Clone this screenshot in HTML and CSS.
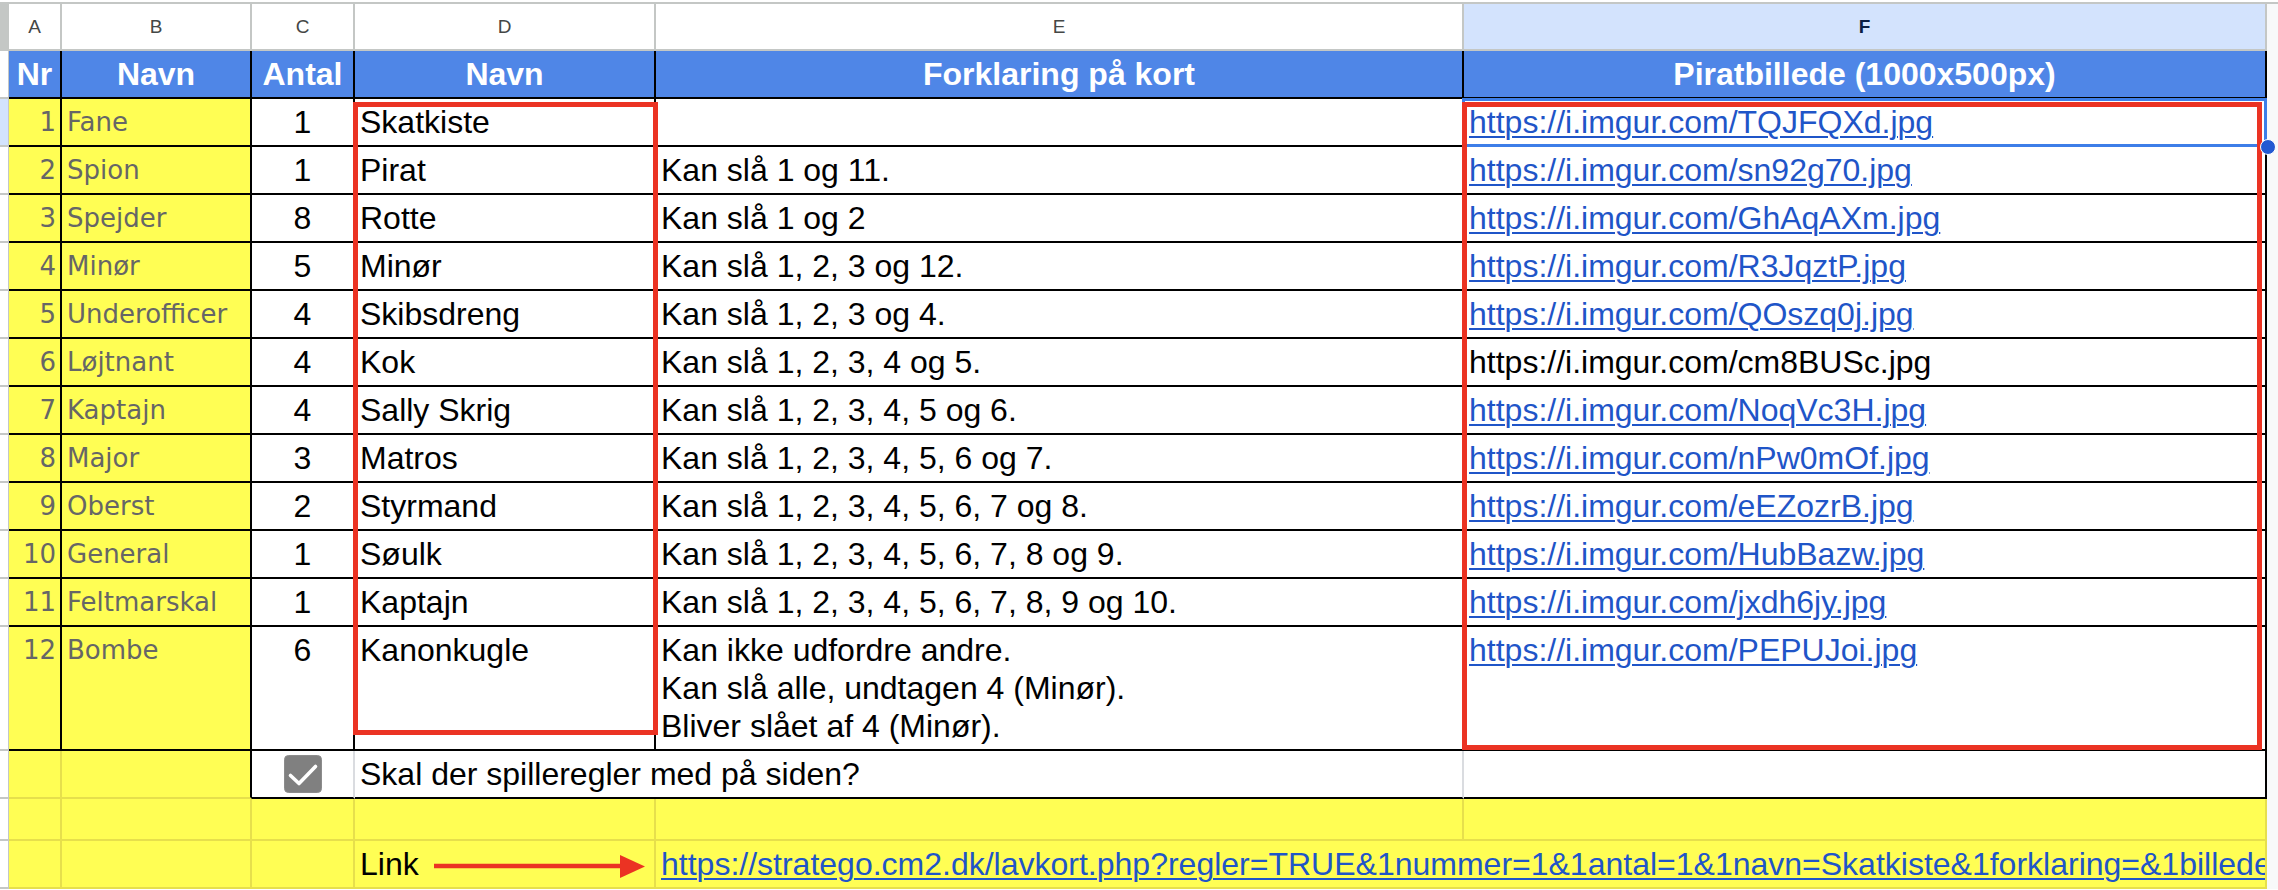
FILE: index.html
```html
<!DOCTYPE html>
<html lang="da">
<head>
<meta charset="utf-8">
<title>Stratego kort</title>
<link rel="stylesheet" href="styles.css">
</head>
<body>
<div class="sheet">
<table class="grid">
<colgroup>
<col class="c-rh"><col class="c-a"><col class="c-b"><col class="c-c"><col class="c-d"><col class="c-e"><col class="c-f"><col class="c-rs">
</colgroup>
<tbody>
<tr class="row-ch">
<td class="corner"></td>
<td class="ch">A</td><td class="ch">B</td><td class="ch">C</td><td class="ch">D</td><td class="ch">E</td><td class="ch ch-sel">F</td>
<td class="rs rs-top"></td>
</tr>
<tr class="row-h">
<td class="rh"></td>
<td class="hd">Nr</td><td class="hd">Navn</td><td class="hd">Antal</td><td class="hd">Navn</td><td class="hd">Forklaring på kort</td><td class="hd">Piratbillede (1000x500px)</td>
<td class="rs"></td>
</tr>
<tr class="row">
<td class="rh rh-sel"></td>
<td class="nr">1</td><td class="nm">Fane</td><td class="cnt">1</td><td>Skatkiste</td><td></td><td><a class="lnk" href="#">https://i.imgur.com/TQJFQXd.jpg</a></td>
<td class="rs"></td>
</tr>
<tr class="row">
<td class="rh"></td>
<td class="nr">2</td><td class="nm">Spion</td><td class="cnt">1</td><td>Pirat</td><td>Kan slå 1 og 11.</td><td><a class="lnk" href="#">https://i.imgur.com/sn92g70.jpg</a></td>
<td class="rs"></td>
</tr>
<tr class="row">
<td class="rh"></td>
<td class="nr">3</td><td class="nm">Spejder</td><td class="cnt">8</td><td>Rotte</td><td>Kan slå 1 og 2</td><td><a class="lnk" href="#">https://i.imgur.com/GhAqAXm.jpg</a></td>
<td class="rs"></td>
</tr>
<tr class="row">
<td class="rh"></td>
<td class="nr">4</td><td class="nm">Minør</td><td class="cnt">5</td><td>Minør</td><td>Kan slå 1, 2, 3 og 12.</td><td><a class="lnk" href="#">https://i.imgur.com/R3JqztP.jpg</a></td>
<td class="rs"></td>
</tr>
<tr class="row">
<td class="rh"></td>
<td class="nr">5</td><td class="nm">Underofficer</td><td class="cnt">4</td><td>Skibsdreng</td><td>Kan slå 1, 2, 3 og 4.</td><td><a class="lnk" href="#">https://i.imgur.com/QOszq0j.jpg</a></td>
<td class="rs"></td>
</tr>
<tr class="row">
<td class="rh"></td>
<td class="nr">6</td><td class="nm">Løjtnant</td><td class="cnt">4</td><td>Kok</td><td>Kan slå 1, 2, 3, 4 og 5.</td><td>https://i.imgur.com/cm8BUSc.jpg</td>
<td class="rs"></td>
</tr>
<tr class="row">
<td class="rh"></td>
<td class="nr">7</td><td class="nm">Kaptajn</td><td class="cnt">4</td><td>Sally Skrig</td><td>Kan slå 1, 2, 3, 4, 5 og 6.</td><td><a class="lnk" href="#">https://i.imgur.com/NoqVc3H.jpg</a></td>
<td class="rs"></td>
</tr>
<tr class="row">
<td class="rh"></td>
<td class="nr">8</td><td class="nm">Major</td><td class="cnt">3</td><td>Matros</td><td>Kan slå 1, 2, 3, 4, 5, 6 og 7.</td><td><a class="lnk" href="#">https://i.imgur.com/nPw0mOf.jpg</a></td>
<td class="rs"></td>
</tr>
<tr class="row">
<td class="rh"></td>
<td class="nr">9</td><td class="nm">Oberst</td><td class="cnt">2</td><td>Styrmand</td><td>Kan slå 1, 2, 3, 4, 5, 6, 7 og 8.</td><td><a class="lnk" href="#">https://i.imgur.com/eEZozrB.jpg</a></td>
<td class="rs"></td>
</tr>
<tr class="row">
<td class="rh"></td>
<td class="nr">10</td><td class="nm">General</td><td class="cnt">1</td><td>Søulk</td><td>Kan slå 1, 2, 3, 4, 5, 6, 7, 8 og 9.</td><td><a class="lnk" href="#">https://i.imgur.com/HubBazw.jpg</a></td>
<td class="rs"></td>
</tr>
<tr class="row">
<td class="rh"></td>
<td class="nr">11</td><td class="nm">Feltmarskal</td><td class="cnt">1</td><td>Kaptajn</td><td>Kan slå 1, 2, 3, 4, 5, 6, 7, 8, 9 og 10.</td><td><a class="lnk" href="#">https://i.imgur.com/jxdh6jy.jpg</a></td>
<td class="rs"></td>
</tr>
<tr class="row-tall">
<td class="rh"></td>
<td class="nr">12</td><td class="nm">Bombe</td><td class="cnt">6</td><td>Kanonkugle</td><td>Kan ikke udfordre andre.<br>Kan slå alle, undtagen 4 (Minør).<br>Bliver slået af 4 (Minør).</td><td><a class="lnk" href="#">https://i.imgur.com/PEPUJoi.jpg</a></td>
<td class="rs"></td>
</tr>
<tr class="row">
<td class="rh"></td>
<td class="yl ygr"></td><td class="yl"></td>
<td class="chk lgr"><svg class="cb" viewBox="0 0 38 38" width="38" height="38"><rect x="0.5" y="0.5" width="37" height="37" rx="4" fill="#808080" stroke="#8c8c8c"/><polyline points="6.5,20.5 15,28.5 31.5,11.5" fill="none" stroke="#ffffff" stroke-width="3.6" stroke-linecap="round" stroke-linejoin="round"/></svg></td>
<td colspan="2" class="lgr">Skal der spilleregler med på siden?</td>
<td></td>
<td class="rs"></td>
</tr>
<tr class="row-short">
<td class="rh"></td>
<td class="yl ygr"></td><td class="yl ygr"></td><td class="yl ygr"></td><td class="yl ygr"></td><td class="yl ygr"></td><td class="yl ygr"></td>
<td class="rs"></td>
</tr>
<tr class="row">
<td class="rh"></td>
<td class="yl ygr"></td><td class="yl ygr"></td><td class="yl ygr"></td><td class="yl ygr">Link</td>
<td colspan="2" class="yl ygr"><a class="lnk" href="#">https://stratego.cm2.dk/lavkort.php?regler=TRUE&amp;1nummer=1&amp;1antal=1&amp;1navn=Skatkiste&amp;1forklaring=&amp;1billede=https://i.imgur.com/TQJFQXd.jpg&amp;2nummer=2&amp;2antal=1&amp;2navn=Pirat</a></td>
<td class="rs"></td>
</tr>
</tbody>
</table>

<div class="sel"></div>
<div class="mark mark-d"></div>
<div class="mark mark-f"></div>
<div class="handle"></div>
<svg class="arrow" viewBox="0 0 220 30" width="220" height="30">
<line x1="4" y1="14" x2="192" y2="14" stroke="#eb3323" stroke-width="4.4"/>
<polygon points="190,3 215,14.5 190,26" fill="#eb3323"/>
</svg>
</div>
</body>
</html>
```

FILE: styles.css
```css
html, body {
  margin: 0;
  padding: 0;
  background: #ffffff;
}

body {
  width: 2278px;
  height: 890px;
  overflow: hidden;
}

.sheet {
  position: relative;
  width: 2278px;
  height: 890px;
  padding-top: 2px;
  box-sizing: border-box;
}

.grid {
  table-layout: fixed;
  border-collapse: separate;
  border-spacing: 0;
  width: 2278px;
}

.c-rh { width: 9px; }
.c-a { width: 53px; }
.c-b { width: 190px; }
.c-c { width: 103px; }
.c-d { width: 301px; }
.c-e { width: 808px; }
.c-f { width: 803px; }
.c-rs { width: 11px; }

.grid td {
  box-sizing: border-box;
  padding: 4px 5px 0 5px;
  vertical-align: top;
  font-family: "Liberation Sans", Arial, sans-serif;
  font-size: 32px;
  line-height: 38px;
  color: #000000;
  background: #ffffff;
  border-right: 2px solid #000000;
  border-bottom: 2px solid #000000;
  white-space: nowrap;
  overflow: hidden;
}

.row-ch { height: 49px; }
.row-h { height: 48px; }
.row { height: 48px; }
.row-tall { height: 124px; }
.row-short { height: 42px; }

/* column letter header */
.grid td.ch,
.grid td.corner {
  border-top: 2px solid #c4c7c5;
  border-right: 2px solid #c4c7c5;
  border-bottom: 2px solid #c4c7c5;
  font-size: 19px;
  line-height: 22px;
  color: #444746;
  text-align: center;
  vertical-align: middle;
  padding: 0;
}

.grid td.corner {
  background: #c4c7c5;
  border-right-width: 1px;
}

.grid td.ch-sel {
  background: #d3e3fd;
  color: #0b1f44;
  font-weight: bold;
}

/* row header strip */
.grid td.rh {
  padding: 0;
  background: #ffffff;
  border-right: 1px solid #c4c7c5;
  border-bottom: 2px solid #c4c7c5;
}

.grid td.rh-sel {
  background: #d3e3fd;
}

/* right strip */
.grid td.rs {
  padding: 0;
  background: #f8f9fa;
  border: none;
}

.grid td.rs-top {
  border-top: 2px solid #c4c7c5;
}

/* blue header row */
.grid td.hd {
  background: #4f86e7;
  color: #ffffff;
  font-weight: bold;
  text-align: center;
  padding-left: 0;
  padding-right: 0;
}

/* yellow name columns */
.grid td.nr,
.grid td.nm {
  background: #fffe54;
  font-family: "DejaVu Sans", Verdana, sans-serif;
  font-size: 26px;
  color: #666666;
}

.grid td.nr {
  text-align: right;
  padding-right: 4px;
  padding-left: 0;
}

.grid td.cnt {
  text-align: center;
}

.lnk {
  color: #1f55c8;
  text-decoration: underline;
  text-decoration-thickness: 2px;
  text-underline-offset: 3px;
}

/* yellow filler area */
.grid td.yl {
  background: #fffe54;
  border-bottom-color: #e6df4c;
}

.grid td.ygr {
  border-right-color: #e6df4c;
}

.grid td.lgr {
  border-right-color: #dadce0;
}

.grid td.chk {
  padding: 0;
  text-align: center;
  vertical-align: middle;
  line-height: 0;
}

.cb {
  display: inline-block;
  vertical-align: middle;
}

/* overlays */
.sel {
  position: absolute;
  left: 1462px;
  top: 98px;
  width: 805px;
  height: 49px;
  box-sizing: border-box;
  border: 3px solid #3d7ee8;
}

.mark {
  position: absolute;
  box-sizing: border-box;
  border: 5px solid #eb3323;
}

.mark-d {
  left: 353px;
  top: 102px;
  width: 305px;
  height: 633px;
}

.mark-f {
  left: 1462px;
  top: 102px;
  width: 800px;
  height: 648px;
}

.handle {
  position: absolute;
  left: 2260px;
  top: 139px;
  width: 14px;
  height: 14px;
  border-radius: 50%;
  background: #2359d2;
  border: 1px solid #ffffff;
}

.arrow {
  position: absolute;
  left: 430px;
  top: 852px;
}
```
